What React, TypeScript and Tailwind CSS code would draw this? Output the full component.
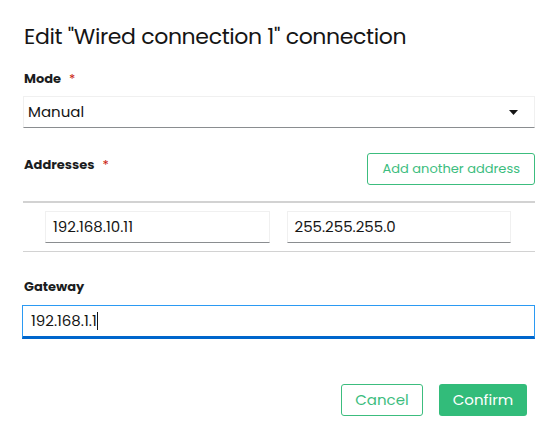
import React from "react";

const font = { fontFamily: "Poppins, 'Open Sans', 'Liberation Sans', sans-serif" };

const Label = ({ text, required }: { text: string; required?: boolean }) => (
  <div className="flex items-center text-[13px] font-bold text-[#1b1d21] leading-5">
    <span>{text}</span>
    {required && <span className="ml-2 text-[#c9190b] font-normal">*</span>}
  </div>
);

const TextInput = ({ value }: { value: string }) => (
  <div className="h-8 flex-1 flex items-center px-[7px] border border-[#f0f0f0] border-b-[#8a8d90] text-[15px] text-[#151515]">
    {value}
  </div>
);

export default function App() {
  return (
    <div className="w-[559px] h-[439px] bg-white px-6 pt-[21px]" style={font}>
      <h1 className="text-[22px] leading-8 font-normal text-[#151515] tracking-[-0.35px]">
        Edit "Wired connection 1" connection
      </h1>

      <div className="mt-4">
        <Label text="Mode" required />
      </div>
      <div className="mt-[7px] h-8 flex items-center justify-between pl-1 pr-4 -ml-px border border-[#f0f0f0] border-b-[#8a8d90] text-[15px] text-[#151515]">
        <span>Manual</span>
        <svg width="9" height="5" viewBox="0 0 9 5">
          <path d="M0 0h9L4.5 5z" fill="#151515" />
        </svg>
      </div>

      <div className="mt-[25px] flex items-start justify-between">
        <div className="mt-[2px]">
          <Label text="Addresses" required />
        </div>
        <button className="h-8 px-[14px] border border-[#3cbd7e] rounded-[3px] text-[13px] text-[#3cbd7e]">
          Add another address
        </button>
      </div>

      <div className="mt-4 -ml-px border-t-2 border-[#d2d2d2]">
        <div className="flex gap-[17px] pl-[22px] pr-6 py-2">
          <TextInput value="192.168.10.11" />
          <TextInput value="255.255.255.0" />
        </div>
        <div className="border-t border-[#d2d2d2]" />
      </div>

      <div className="mt-[25px]">
        <Label text="Gateway" />
      </div>
      <div className="mt-2 -ml-[2px] h-[34px] flex items-center pl-2 border border-[#2b9af3] border-b-[3px] border-b-[#0066cc] text-[15px] text-[#151515]">
        <span>192.168.1.1</span>
        <span className="w-px h-[18px] bg-[#151515]" />
      </div>

      <div className="mt-[45px] flex justify-end gap-4 pr-2">
        <button className="h-8 w-[82px] border border-[#3cbd7e] rounded-[3px] text-[15px] text-[#3cbd7e]">
          Cancel
        </button>
        <button className="h-8 w-[88px] bg-[#32bc7a] rounded-[3px] text-[15px] text-white">
          Confirm
        </button>
      </div>
    </div>
  );
}
